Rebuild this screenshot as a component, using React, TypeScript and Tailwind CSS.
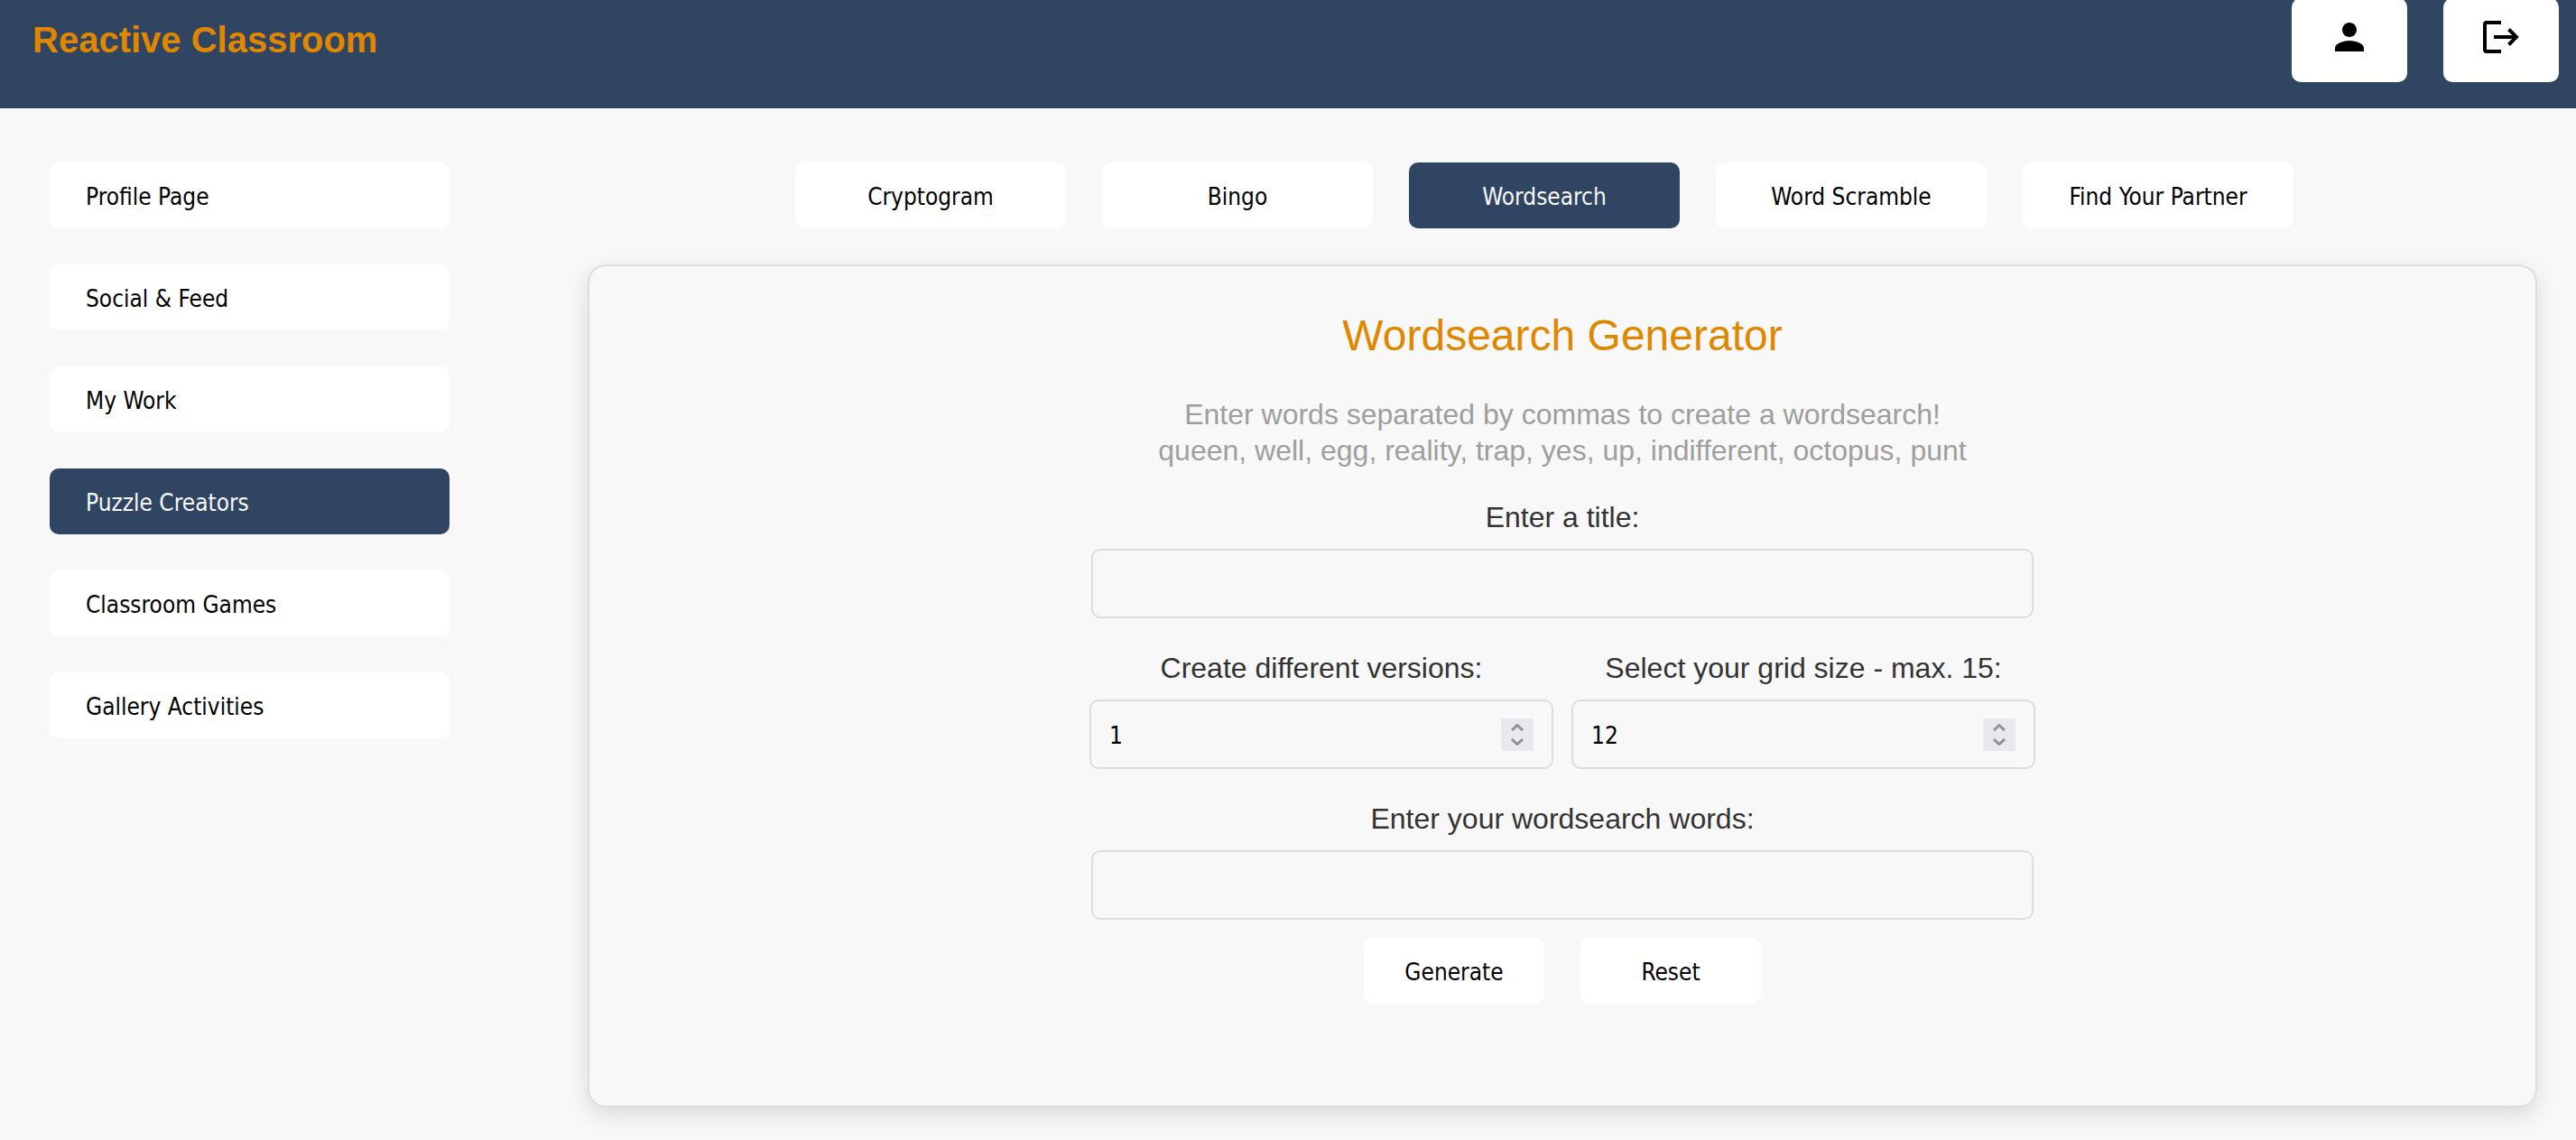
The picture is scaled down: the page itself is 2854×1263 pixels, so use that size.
import { useId, useState } from "react";

const sidebarItems = [
  "Profile Page",
  "Social & Feed",
  "My Work",
  "Puzzle Creators",
  "Classroom Games",
  "Gallery Activities",
];

const tabs = ["Cryptogram", "Bingo", "Wordsearch", "Word Scramble", "Find Your Partner"];

const buttonBase =
  "h-[73px] rounded-[10px] pt-0.5 font-['DejaVu_Sans_Condensed',Tahoma,sans-serif] text-[26px] leading-10 whitespace-nowrap cursor-pointer";
const idle = "bg-white text-black";
const active = "bg-[#2f4562] text-[#f8f8f8]";

function PersonIcon() {
  return (
    <svg viewBox="0 0 24 24" className="size-12" fill="currentColor" aria-hidden="true">
      <path d="M12 12c2.21 0 4-1.79 4-4s-1.79-4-4-4-4 1.79-4 4 1.79 4 4 4zm0 2c-2.67 0-8 1.34-8 4v2h16v-2c0-2.66-5.33-4-8-4z" />
    </svg>
  );
}

function LogoutIcon() {
  return (
    <svg viewBox="0 0 24 24" className="size-12" fill="currentColor" aria-hidden="true">
      <path d="M12 3H4a2 2 0 0 0-2 2v14a2 2 0 0 0 2 2h8v-2H4V5h8z" />
      <path d="m21.9 12-4.95-4.95-1.41 1.41L18.08 11H8v2h10.08l-2.54 2.54 1.41 1.41z" />
    </svg>
  );
}

function Header() {
  const iconButton =
    "-mt-0.5 flex h-[93px] w-32 justify-center rounded-[10px] bg-white pt-[19px] text-black cursor-pointer";
  return (
    <header className="flex h-[120px] items-start justify-between bg-[#2f4562] pl-9 pr-[19px]">
      <a href="#" className="mt-5 text-[40px] leading-[48px] font-bold text-[#e08700]">
        Reactive Classroom
      </a>
      <div className="flex gap-10">
        <button type="button" aria-label="Profile" className={iconButton}>
          <PersonIcon />
        </button>
        <button type="button" aria-label="Log out" className={iconButton}>
          <LogoutIcon />
        </button>
      </div>
    </header>
  );
}

const fieldLabel = "block text-center text-[32px] leading-10 text-[#333]";

function TextField({ label }: { label: string }) {
  const id = useId();
  return (
    <div className="flex flex-col gap-[15px]">
      <label htmlFor={id} className={fieldLabel}>
        {label}
      </label>
      <input
        id={id}
        type="text"
        className="h-[77px] w-full rounded-[10px] border-2 border-[#ddd] px-5 font-['DejaVu_Sans_Condensed',Tahoma,sans-serif] text-[26px] text-black"
      />
    </div>
  );
}

function NumberField({ label, initial, max }: { label: string; initial: number; max: number }) {
  const id = useId();
  const [value, setValue] = useState(initial);
  const step = (by: number) => setValue((v) => Math.min(max, Math.max(1, v + by)));
  return (
    <div className="flex min-w-0 flex-1 flex-col gap-[15px]">
      <label htmlFor={id} className={fieldLabel}>
        {label}
      </label>
      <div className="flex h-[77px] items-center rounded-[10px] border-2 border-[#ddd] px-5">
        <input
          id={id}
          type="number"
          min={1}
          max={max}
          value={value}
          onChange={(e) => setValue(Number(e.target.value))}
          className="min-w-0 flex-1 appearance-none pt-0.5 font-['DejaVu_Sans_Condensed',Tahoma,sans-serif] text-[26px] leading-9 text-black outline-none [appearance:textfield]"
        />
        <div className="flex size-9 flex-col bg-[#e9e9ed] text-[#8f8f9d]">
          <button
            type="button"
            aria-label={`Increase: ${label}`}
            onClick={() => step(1)}
            className="flex h-1/2 items-end justify-center pb-1 cursor-pointer"
          >
            <svg viewBox="0 0 14 8" className="h-2 w-3.5" fill="none" stroke="currentColor" strokeWidth="3" aria-hidden="true">
              <path d="M1 7 7 1.5 13 7" />
            </svg>
          </button>
          <button
            type="button"
            aria-label={`Decrease: ${label}`}
            onClick={() => step(-1)}
            className="flex h-1/2 items-start justify-center pt-1 cursor-pointer"
          >
            <svg viewBox="0 0 14 8" className="h-2 w-3.5" fill="none" stroke="currentColor" strokeWidth="3" aria-hidden="true">
              <path d="M1 1 7 6.5 13 1" />
            </svg>
          </button>
        </div>
      </div>
    </div>
  );
}

export default function App() {
  const [page, setPage] = useState("Puzzle Creators");
  const [tab, setTab] = useState("Wordsearch");

  return (
    <div className="min-h-screen bg-[#f8f8f8] font-['Liberation_Sans',Arial,sans-serif]">
      <Header />
      <div className="flex items-start gap-[153px] pt-[60px] pr-[43px] pb-9 pl-[55px]">
        <nav aria-label="Sections" className="flex w-[443px] shrink-0 flex-col gap-10">
          {sidebarItems.map((item) => (
            <button
              key={item}
              type="button"
              onClick={() => setPage(item)}
              className={`${buttonBase} px-10 text-left ${item === page ? active : idle}`}
            >
              {item}
            </button>
          ))}
        </nav>

        <main className="flex min-w-0 flex-1 flex-col gap-10">
          <nav aria-label="Puzzles" className="flex justify-center gap-10 pr-10">
            {tabs.map((item) => (
              <button
                key={item}
                type="button"
                onClick={() => setTab(item)}
                className={`${buttonBase} w-[300px] ${item === tab ? active : idle}`}
              >
                {item}
              </button>
            ))}
          </nav>

          <section className="rounded-[20px] border-2 border-[#ddd] px-10 pt-12 pb-[113px] shadow-[0_8px_24px_rgba(0,0,0,0.12)]">
            <h1 className="text-center text-[48px] leading-[58px] text-[#e08700]">Wordsearch Generator</h1>
            <p className="mt-[38px] text-center text-[32px] leading-10 text-[#9e9e9e]">
              Enter words separated by commas to create a wordsearch!
              <br />
              queen, well, egg, reality, trap, yes, up, indifferent, octopus, punt
            </p>
            <form
              onSubmit={(e) => e.preventDefault()}
              className="mx-auto mt-[34px] flex max-w-[1044px] flex-col gap-[35px]"
            >
              <TextField label="Enter a title:" />
              <div className="-mx-0.5 flex gap-5">
                <NumberField label="Create different versions:" initial={1} max={10} />
                <NumberField label="Select your grid size - max. 15:" initial={12} max={15} />
              </div>
              <div className="flex flex-col gap-5">
                <TextField label="Enter your wordsearch words:" />
                <div className="flex justify-center gap-10">
                  <button type="submit" className={`${buttonBase} ${idle} w-[200px]`}>
                    Generate
                  </button>
                  <button type="reset" className={`${buttonBase} ${idle} w-[200px]`}>
                    Reset
                  </button>
                </div>
              </div>
            </form>
          </section>
        </main>
      </div>
    </div>
  );
}
